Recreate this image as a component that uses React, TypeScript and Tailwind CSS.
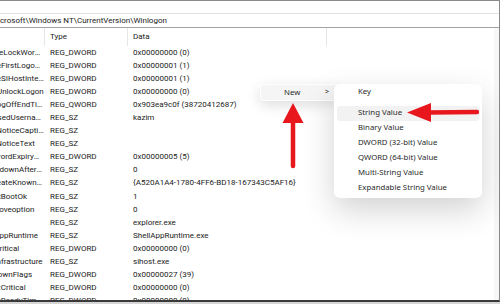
import React from 'react';

const rows: [string, string, string][] = [
  ['DisableLockWorkstation', 'REG_DWORD', '0x00000000 (0)'],
  ['EnableFirstLogonAnimation', 'REG_DWORD', '0x00000001 (1)'],
  ['EnableSIHostIntegration', 'REG_DWORD', '0x00000001 (1)'],
  ['ForceUnlockLogon', 'REG_DWORD', '0x00000000 (0)'],
  ['LastLogOffEndTimePerfCounter', 'REG_QWORD', '0x903ea9c0f (38720412687)'],
  ['LastUsedUsername', 'REG_SZ', 'kazim'],
  ['LegalNoticeCaption', 'REG_SZ', ''],
  ['LegalNoticeText', 'REG_SZ', ''],
  ['PasswordExpiryWarning', 'REG_DWORD', '0x00000005 (5)'],
  ['PowerdownAfterShutdown', 'REG_SZ', '0'],
  ['PreCreateKnownFolders', 'REG_SZ', '{A520A1A4-1780-4FF6-BD18-167343C5AF16}'],
  ['ReportBootOk', 'REG_SZ', '1'],
  ['scremoveoption', 'REG_SZ', '0'],
  ['Shell', 'REG_SZ', 'explorer.exe'],
  ['ShellAppRuntime', 'REG_SZ', 'ShellAppRuntime.exe'],
  ['ShellCritical', 'REG_DWORD', '0x00000000 (0)'],
  ['ShellInfrastructure', 'REG_SZ', 'sihost.exe'],
  ['ShutdownFlags', 'REG_DWORD', '0x00000027 (39)'],
  ['SiHostCritical', 'REG_DWORD', '0x00000000 (0)'],
  ['SiHostReadyTimeOut', 'REG_DWORD', '0x00000000 (0)'],
];

const subItems = [
  'String Value',
  'Binary Value',
  'DWORD (32-bit) Value',
  'QWORD (64-bit) Value',
  'Multi-String Value',
  'Expandable String Value',
];

function Arrows() {
  return (
    <svg className="absolute inset-0 pointer-events-none" width="500" height="304" viewBox="0 0 500 304">
      {/* up arrow at New */}
      <polygon points="293,103 303.5,123 282.5,123" fill="#e8171d" />
      <line x1="293" y1="121" x2="293" y2="166" stroke="#e8171d" strokeWidth="4.5" strokeLinecap="round" />
      {/* left arrow at String Value */}
      <polygon points="407,112.5 431,103 431,122" fill="#e8171d" />
      <line x1="429" y1="112.5" x2="477" y2="112" stroke="#e8171d" strokeWidth="4.5" strokeLinecap="round" />
    </svg>
  );
}

const menuFont = { fontFamily: '"Noto Sans", Roboto, sans-serif' };

export default function App() {
  return (
    <div
      className="relative w-[500px] h-[304px] overflow-hidden bg-white text-[8px] text-[#1b1b1b]"
      style={{ fontFamily: 'Roboto, "Liberation Sans", sans-serif' }}
    >
      <div className="flex flex-col h-[302px] border-t border-r border-b-2 border-t-[#8a8a8a] border-r-[#8a8a8a] border-b-[#3a3a3a]">
        {/* toolbar strip */}
        <div className="h-[13px] border-b border-[#e2e2e2]" />
        {/* address bar */}
        <div className="h-[14px] flex items-center overflow-hidden border-b border-[#a3a3a3] whitespace-nowrap">
          <span className="-ml-[9px]">Microsoft\Windows NT\CurrentVersion\Winlogon</span>
        </div>
        {/* list */}
        <div className="flex-1 flex overflow-hidden">
          <div className="flex-1 overflow-hidden">
            <div className="-ml-[25px] flex h-[18px] items-center">
              <div className="w-[70px] h-full border-r border-[#e6e6e6]" />
              <div className="w-[83px] h-full border-r border-[#e6e6e6] pl-[5px] flex items-center">Type</div>
              <div className="w-[199px] h-full border-r border-[#e6e6e6] pl-[5px] flex items-center">Data</div>
            </div>
            {rows.map(([name, type, data]) => (
              <div key={name} className="-ml-[25px] flex h-[13.1px] items-center whitespace-nowrap">
                <div className="w-[70px] pl-[2px] pr-[1px] overflow-hidden text-ellipsis">{name}</div>
                <div className="w-[83px] pl-[5px]">{type}</div>
                <div className="w-[199px] pl-[5px]">{data}</div>
              </div>
            ))}
          </div>
          <div className="w-[5px] bg-[#f7f7f7]" />
        </div>
      </div>
      <div className="h-[2px] bg-[#d6d6d6]" />

      {/* context menu: New */}
      <div
        className="absolute left-[260px] top-[84px] w-[80px] h-[17px] rounded-[4px] bg-white shadow-[0_4px_14px_rgba(0,0,0,0.14)] p-[1px]"
        style={menuFont}
      >
        <div className="h-full rounded-[3px] bg-[#f5f5f5] flex items-center text-[7.8px] text-[#2a2a2a]">
          <span className="ml-[23px]">New</span>
          <span className="ml-auto mr-[10px] text-[7px]">&gt;</span>
        </div>
      </div>

      {/* submenu */}
      <div
        className="absolute left-[334px] top-[84px] w-[148px] rounded-[6px] bg-white shadow-[0_12px_32px_rgba(0,0,0,0.18)] px-[3px] pt-[0.5px] pb-[2.5px] text-[7.8px] text-[#2a2a2a]"
        style={menuFont}
      >
        <div className="h-[15px] flex items-center pl-[21px]">Key</div>
        <div className="h-[6px]" />
        {subItems.map((label, i) => (
          <div
            key={label}
            className={
              i === 0
                ? 'h-[15px] flex items-center pl-[21px] rounded-[3px] bg-[#f2f2f2]'
                : 'h-[15px] flex items-center pl-[21px]'
            }
          >
            {label}
          </div>
        ))}
      </div>

      <Arrows />
    </div>
  );
}
